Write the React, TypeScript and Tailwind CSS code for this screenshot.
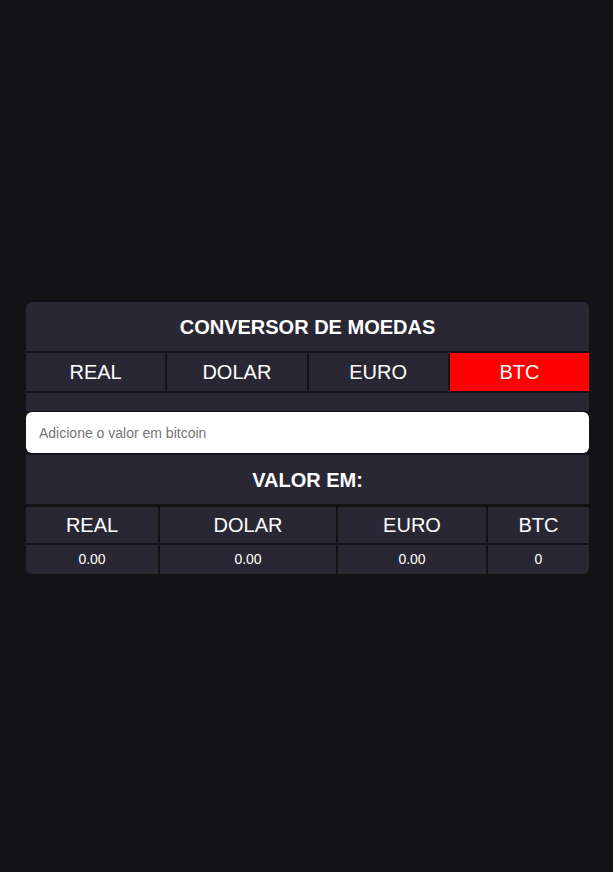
import React from "react";

export default function App() {
  const tabs = ["REAL", "DOLAR", "EURO", "BTC"];
  const cols = ["REAL", "DOLAR", "EURO", "BTC"];
  const vals = ["0.00", "0.00", "0.00", "0"];
  return (
    <div
      className="min-h-screen bg-[#131316] pt-[302px] pl-[26px] pr-[24px]"
      style={{ fontFamily: '"Liberation Sans", Arial, sans-serif' }}
    >
      <div className="flex flex-col rounded-md overflow-hidden bg-[#131316] text-white">
        <div className="h-[49px] bg-[#2a2734] flex items-center justify-center text-[20px] font-bold">
          CONVERSOR DE MOEDAS
        </div>
        <div className="mt-[2px] grid grid-cols-4 gap-[2px] h-[38px]">
          {tabs.map((t) => (
            <button
              key={t}
              className={`flex items-center justify-center text-[20px] text-white ${
                t === "BTC" ? "bg-[#ff0000]" : "bg-[#2a2734]"
              }`}
            >
              {t}
            </button>
          ))}
        </div>
        <div className="mt-[2px] h-[18px] bg-[#2a2734]" />
        <input
          className="mt-[1px] h-[41px] bg-white rounded-md px-[13px] text-[14px] text-black placeholder:text-[#757575] outline-none"
          placeholder="Adicione o valor em bitcoin"
        />
        <div className="mt-[2px] h-[49px] bg-[#2a2734] flex items-center justify-center text-[20px] font-bold">
          VALOR EM:
        </div>
        <div className="mt-[3px] grid grid-cols-[132px_176px_148px_1fr] gap-x-[2px] gap-y-[2px]">
          {cols.map((c) => (
            <div key={c} className="h-[36px] bg-[#2a2734] flex items-center justify-center text-[20px]">
              {c}
            </div>
          ))}
          {vals.map((v, i) => (
            <div key={i} className="h-[29px] bg-[#2a2734] flex items-center justify-center text-[14px]">
              {v}
            </div>
          ))}
        </div>
      </div>
    </div>
  );
}
